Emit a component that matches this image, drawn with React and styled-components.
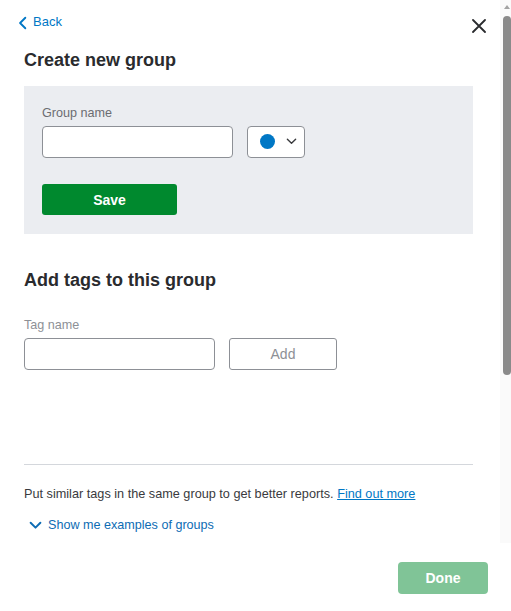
import styled, { createGlobalStyle } from 'styled-components';

const GlobalStyle = createGlobalStyle`
  html, body {
    margin: 0;
    padding: 0;
    background: #fff;
  }
  body {
    font-family: "Liberation Sans", Arial, sans-serif;
    color: #393a3d;
  }
`;

const Panel = styled.div`
  width: 511px;
  height: 611px;
  display: flex;
  flex-direction: column;
  background: #fff;
`;

const ScrollArea = styled.div`
  height: 543px;
  flex-shrink: 0;
  display: flex;
`;

const Content = styled.div`
  flex: 1;
  overflow: hidden;
  padding: 0 27px 0 24px;
`;

const ScrollTrack = styled.div`
  width: 11px;
  background: #fafafa;
  display: flex;
  flex-direction: column;
  align-items: flex-end;
`;

const ScrollArrow = styled.div`
  height: 16px;
  width: 8px;
  display: flex;
  justify-content: center;
  padding-top: 5px;
  box-sizing: border-box;
`;

const ScrollThumb = styled.div`
  width: 8px;
  height: ${(p) => p.$size}px;
  background: #8a8a8a;
  border-radius: 4px;
`;

const TopBar = styled.div`
  display: flex;
  justify-content: space-between;
  align-items: flex-start;
  margin-right: -14px;
  padding-top: 13px;
  height: 49px;
  box-sizing: border-box;
`;

const BackLink = styled.a`
  display: flex;
  align-items: center;
  gap: 3px;
  margin-left: -8px;
  color: #0077c5;
  font-size: 13px;
  text-decoration: none;
  cursor: pointer;

  svg {
    margin-top: 3px;
  }
`;

const CloseButton = styled.button`
  border: 0;
  background: none;
  padding: 0;
  margin-top: 5px;
  width: 16px;
  height: 16px;
  display: flex;
  align-items: center;
  justify-content: center;
  cursor: pointer;
`;

const Heading = styled.h2`
  margin: 0;
  font-size: 18px;
  font-weight: 700;
  color: #2a2b2e;
  line-height: 22px;
`;

const GroupBox = styled.div`
  margin-top: 15px;
  background: #ebedf1;
  padding: 20px 18px 19px;
`;

const Label = styled.label`
  display: block;
  font-size: 12.6px;
  line-height: 14px;
  color: ${(p) => (p.$muted ? '#8d9096' : '#6b6c72')};
  margin-bottom: 6px;
`;

const Row = styled.div`
  display: flex;
  align-items: center;
  gap: 14px;
`;

const TextInput = styled.input`
  width: 191px;
  height: 32px;
  box-sizing: border-box;
  border: 1px solid #8d9096;
  border-radius: 4px;
  background: #fff;
  padding: 0 8px;
  font: inherit;
  &:focus {
    outline: none;
  }
`;

const ColorSelect = styled.button`
  width: 58px;
  height: 32px;
  margin-top: -1px;
  box-sizing: border-box;
  border: 1px solid #8d9096;
  border-radius: 4px;
  background: #fff;
  display: flex;
  align-items: center;
  gap: 11px;
  padding: 0 0 0 12px;
  cursor: pointer;
`;

const Dot = styled.span`
  width: 15px;
  height: 15px;
  border-radius: 50%;
  background: ${(p) => p.$color};
`;

const SaveButton = styled.button`
  margin-top: 26px;
  width: 135px;
  height: 31px;
  border: 0;
  border-radius: 3px;
  background: #00892e;
  color: #fff;
  font-family: inherit;
  font-weight: 700;
  font-size: 14px;
  cursor: pointer;
`;

const AddButton = styled.button`
  width: 108px;
  height: 32px;
  margin-top: -1px;
  box-sizing: border-box;
  border: 1px solid #8d9096;
  border-radius: 3px;
  background: #fff;
  color: #8d9096;
  font-family: inherit;
  font-size: 14px;
`;

const TagSection = styled.div`
  margin-top: 35px;
`;

const TagField = styled.div`
  margin-top: 27px;
`;

const Divider = styled.hr`
  margin: 94px 0 0;
  border: 0;
  border-top: 1px solid #d4d7dc;
`;

const Note = styled.p`
  margin: 22px 0 0;
  font-size: 12.7px;
  line-height: 14px;
  color: #393a3d;
`;

const Link = styled.a`
  color: #0077c5;
  text-decoration: underline;
  cursor: pointer;
`;

const Expander = styled.button`
  margin: 17px 0 0 5px;
  padding: 0;
  border: 0;
  background: none;
  display: flex;
  align-items: center;
  gap: 6px;
  color: #0d6cb4;
  font-family: inherit;
  font-size: 12.6px;
  cursor: pointer;
`;

const Footer = styled.div`
  flex: 1;
  display: flex;
  justify-content: flex-end;
  align-items: flex-start;
  padding: 19px 23px 0 0;
`;

const DoneButton = styled.button`
  width: 90px;
  height: 32px;
  border: 0;
  border-radius: 4px;
  background: #80c497;
  color: #fff;
  font-family: inherit;
  font-weight: 700;
  font-size: 14px;
`;

const Chevron = ({ dir = 'down', color = '#0077c5', size = 12, sw = 1.8 }) => (
  <svg width={size} height={size} viewBox="0 0 12 12" fill="none">
    {dir === 'left' ? (
      <path d="M8 1.5 L3.5 6 L8 10.5" stroke={color} strokeWidth={sw} strokeLinecap="round" strokeLinejoin="round" />
    ) : (
      <path d="M1.5 3.5 L6 8 L10.5 3.5" stroke={color} strokeWidth={sw} strokeLinecap="round" strokeLinejoin="round" />
    )}
  </svg>
);

export default function App() {
  return (
    <>
      <GlobalStyle />
      <Panel>
        <ScrollArea>
          <Content>
            <TopBar>
              <BackLink>
                <Chevron dir="left" size={14} sw={1.6} />
                Back
              </BackLink>
              <CloseButton aria-label="Close">
                <svg width="14" height="14" viewBox="0 0 14 14">
                  <path d="M1 1 L13 13 M13 1 L1 13" stroke="#2a2b2e" strokeWidth="1.8" strokeLinecap="round" />
                </svg>
              </CloseButton>
            </TopBar>
            <Heading>Create new group</Heading>
            <GroupBox>
              <Label>Group name</Label>
              <Row>
                <TextInput type="text" />
                <ColorSelect>
                  <Dot $color="#0077c5" />
                  <Chevron dir="down" color="#393a3d" size={11} sw={1.5} />
                </ColorSelect>
              </Row>
              <SaveButton>Save</SaveButton>
            </GroupBox>
            <TagSection>
              <Heading>Add tags to this group</Heading>
              <TagField>
                <Label $muted>Tag name</Label>
                <Row>
                  <TextInput type="text" />
                  <AddButton>Add</AddButton>
                </Row>
              </TagField>
            </TagSection>
            <Divider />
            <Note>
              Put similar tags in the same group to get better reports. <Link>Find out more</Link>
            </Note>
            <Expander>
              <Chevron dir="down" color="#0d6cb4" size={13} sw={1.8} />
              Show me examples of groups
            </Expander>
          </Content>
          <ScrollTrack>
            <ScrollArrow>
              <svg width="6" height="4" viewBox="0 0 6 4">
                <path d="M0 4 L3 0 L6 4 Z" fill="#a3a3a3" />
              </svg>
            </ScrollArrow>
            <ScrollThumb $size={359} />
          </ScrollTrack>
        </ScrollArea>
        <Footer>
          <DoneButton>Done</DoneButton>
        </Footer>
      </Panel>
    </>
  );
}
